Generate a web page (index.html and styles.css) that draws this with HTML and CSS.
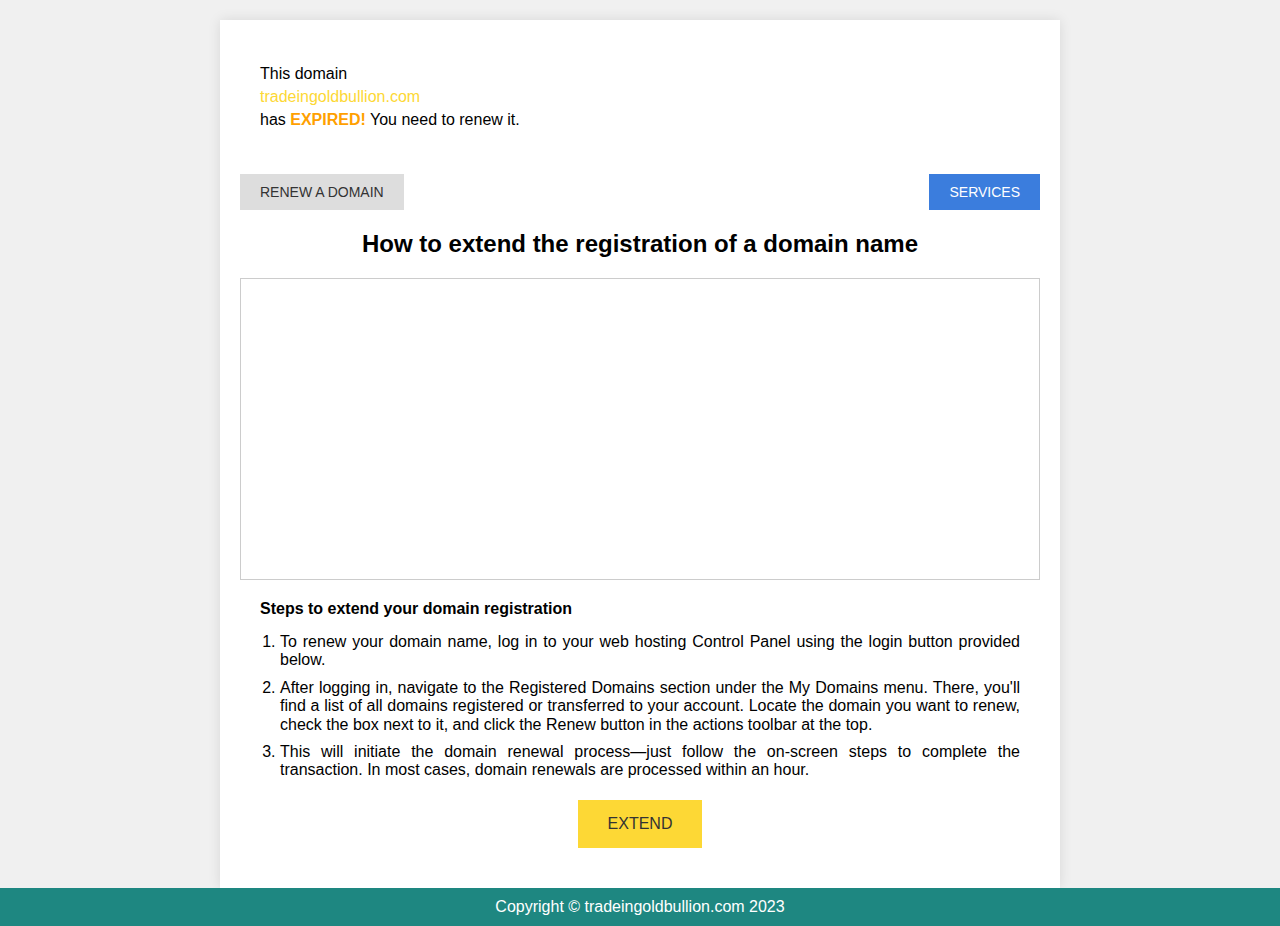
FILE: index.html
```html
<!DOCTYPE html>
<html>
<head>
<meta charset="utf-8">
<link rel="stylesheet" href="styles.css">
</head>
<body>
<div class="card">
  <div class="notice">
    <div>This domain</div>
    <div class="domain">tradeingoldbullion.com</div>
    <div>has <b class="expired">EXPIRED!</b> You need to renew it.</div>
  </div>
  <div class="btn-row">
    <a class="btn btn-grey">RENEW A DOMAIN</a>
    <a class="btn btn-blue">SERVICES</a>
  </div>
  <h1 class="title">How to extend the registration of a domain name</h1>
  <div class="video"></div>
  <div class="steps">
    <div class="steps-title">Steps to extend your domain registration</div>
    <ol class="steps-list">
      <li>To renew your domain name, log in to your web hosting Control Panel using the login button provided below.</li>
      <li>After logging in, navigate to the Registered Domains section under the My Domains menu. There, you'll find a list of all domains registered or transferred to your account. Locate the domain you want to renew, check the box next to it, and click the Renew button in the actions toolbar at the top.</li>
      <li>This will initiate the domain renewal process—just follow the on-screen steps to complete the transaction. In most cases, domain renewals are processed within an hour.</li>
    </ol>
  </div>
  <div class="extend-wrap"><a class="btn-extend">EXTEND</a></div>
</div>
<footer class="footer">Copyright © tradeingoldbullion.com 2023</footer>
</body>
</html>
```
FILE: styles.css
```css
html, body {
  margin: 0;
  padding: 0;
}
body {
  background: #f0f0f0;
  font-family: "Liberation Sans", Arial, sans-serif;
  font-size: 16px;
  color: #000;
}
.card {
  width: 800px;
  margin: 20px auto 0;
  background: #fff;
  padding: 20px 20px 40px;
  box-shadow: 0 0 12px rgba(0, 0, 0, 0.1);
}
.notice {
  padding: 22px 20px 0;
  line-height: 23px;
  height: 112px;
}
.domain {
  color: #fdd835;
}
.expired {
  color: #ffa000;
}
.btn-row {
  display: flex;
  justify-content: space-between;
}
.btn {
  display: inline-block;
  height: 36px;
  line-height: 36px;
  font-size: 14px;
  padding: 0 20px;
}
.btn-grey {
  background: #dddddd;
  color: #333;
}
.btn-blue {
  background: #3b7ddd;
  color: #fff;
}
.title {
  font-size: 24px;
  font-weight: bold;
  text-align: center;
  margin: 20px 0 20px;
  line-height: 28px;
}
.video {
  height: 300px;
  border: 1px solid #cccccc;
}
.steps {
  padding: 0 20px;
}
.steps-title {
  font-weight: bold;
  font-size: 16px;
  margin-top: 19px;
  line-height: 20px;
}
.steps-list {
  margin: 14px 0 0;
  padding-left: 20px;
  text-align: justify;
}
.steps-list li {
  line-height: 18.4px;
  margin-bottom: 9px;
}
.extend-wrap {
  display: flex;
  justify-content: center;
  margin-top: 20px;
}
.btn-extend {
  display: inline-block;
  background: #fdd835;
  color: #333;
  height: 48px;
  line-height: 48px;
  padding: 0 30px;
  font-size: 16px;
}
.footer {
  background: #1e8781;
  color: #fff;
  text-align: center;
  height: 38px;
  line-height: 38px;
  font-size: 16px;
}
```
